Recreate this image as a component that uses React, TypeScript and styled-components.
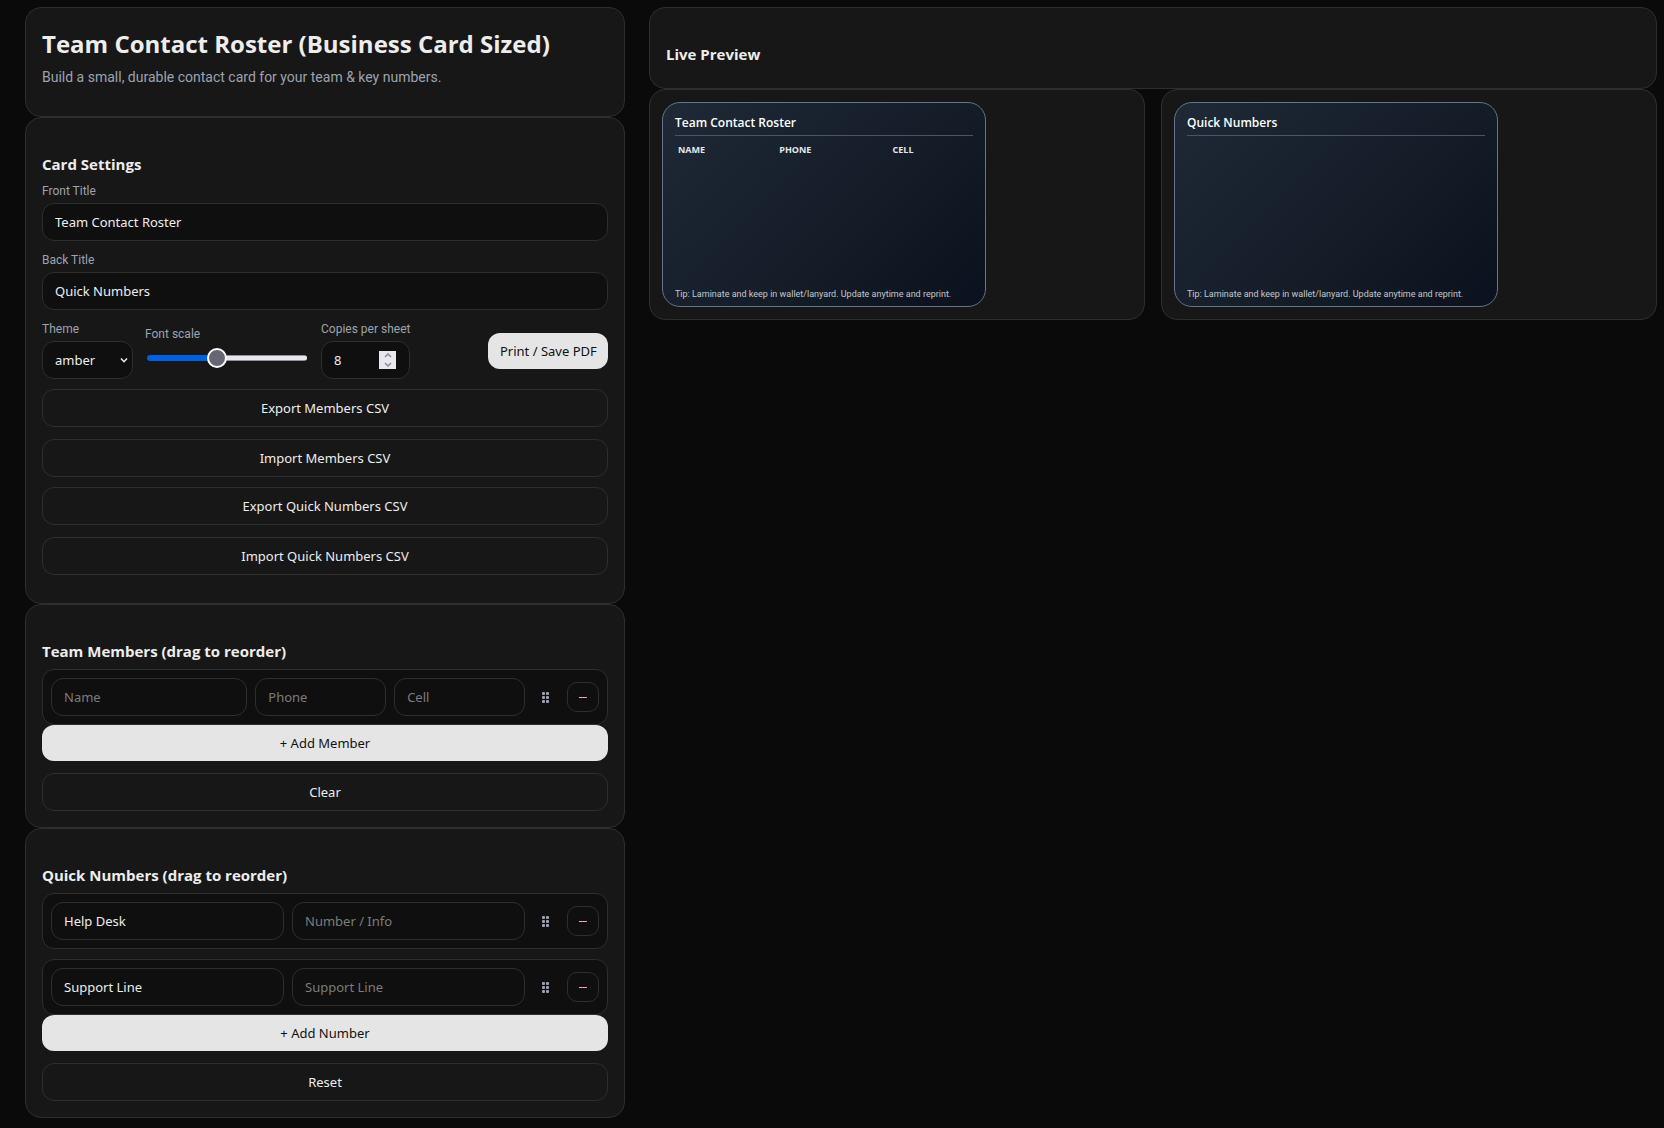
import React, { useState } from "react";
import styled, { createGlobalStyle, css } from "styled-components";

const GlobalStyle = createGlobalStyle`
  *, *::before, *::after { box-sizing: border-box; }
  body {
    margin: 0;
    background: #0a0a0a;
    color: #ededed;
    font-family: "Open Sans", "Noto Sans", sans-serif;
    font-size: 14px;
  }
  input, select, button { font-family: "Noto Sans", "Open Sans", sans-serif; }
`;

const noteFont = `Roboto, "Open Sans", sans-serif`;

const Page = styled.div`
  display: grid;
  grid-template-columns: minmax(0, 25fr) minmax(0, 42fr);
  gap: 24px;
  align-items: start;
  padding: 7px 7px 9px 25px;
`;

const Panel = styled.section`
  padding: 16px;
  border: 1px solid #2e2e2e;
  border-radius: 16px;
  background: #171717;
`;

const HeaderPanel = styled(Panel)`
  padding-bottom: 28px;
`;

const SettingsPanel = styled(Panel)`
  padding-bottom: 28px;
`;

const Title = styled.h1`
  margin: 0 0 2px;
  font-size: 24px;
  line-height: 40px;
  font-weight: 700;
`;

const Subtitle = styled.p`
  margin: 0;
  color: #9ca3af;
  font-family: ${noteFont};
  font-size: 14px;
  line-height: 22px;
`;

const Heading = styled.h3`
  margin: 18px 0 6px;
  font-size: 15px;
  line-height: 24px;
  font-weight: 700;
`;

const Stack = styled.div<{ $gap: number }>`
  display: flex;
  flex-direction: column;
  gap: ${(p) => p.$gap}px;
`;

const Field = styled.div`
  display: flex;
  flex-direction: column;
`;

const Label = styled.label`
  margin-bottom: 3px;
  color: #9ca3af;
  font-family: ${noteFont};
  font-size: 12px;
  line-height: 18px;
  white-space: nowrap;
`;

const box = css`
  height: 38px;
  border: 1px solid #2e2e2e;
  border-radius: 12px;
  background: #0f0f0f;
  color: #ededed;
  font-size: 13px;
`;

const TextInput = styled.input`
  ${box}
  width: 100%;
  min-width: 0;
  padding: 0 12px;
  outline: none;
  &::placeholder { color: #7c7c7c; opacity: 1; }
`;

const Controls = styled.div`
  display: flex;
  align-items: flex-end;
  gap: 12px;
`;

const SelectWrap = styled.div`
  position: relative;
  width: 91px;
`;

const Select = styled.select`
  ${box}
  width: 100%;
  padding: 0 12px;
  appearance: none;
  outline: none;
`;

const Chevron = styled.svg`
  position: absolute;
  right: 4px;
  top: 16px;
  pointer-events: none;
`;

const RangeField = styled(Field)`
  margin-bottom: 9px;
`;

const Range = styled.input<{ $fill: number }>`
  appearance: none;
  width: 160px;
  height: 24px;
  margin: 0 2px;
  background: transparent;
  &::-webkit-slider-runnable-track {
    height: 6px;
    border-radius: 3px;
    background:
      linear-gradient(to right, #0060df ${(p) => p.$fill}%, transparent ${(p) => p.$fill}%),
      linear-gradient(#8f8f9d 1px, #e9e9ed 1px, #e9e9ed 5px, #8f8f9d 5px);
  }
  &::-webkit-slider-thumb {
    appearance: none;
    width: 20px;
    height: 20px;
    margin-top: -7px;
    border: 2px solid #ffffff;
    border-radius: 50%;
    background: #676774;
  }
`;

const NumberWrap = styled.div`
  ${box}
  display: flex;
  align-items: center;
  width: 89px;
  padding: 0 13px 0 12px;
`;

const NumberInput = styled.input`
  flex: 1;
  min-width: 0;
  padding: 0;
  border: 0;
  outline: none;
  background: transparent;
  color: inherit;
  font-size: 13px;
  appearance: textfield;
  &::-webkit-inner-spin-button, &::-webkit-outer-spin-button { appearance: none; margin: 0; }
`;

const Spinner = styled.div`
  display: flex;
  flex-direction: column;
  width: 17px;
  background: #e9e9ed;
`;

const SpinButton = styled.button`
  display: grid;
  place-items: center;
  height: 9px;
  padding: 0;
  border: 0;
  background: transparent;
`;

const Button = styled.button`
  width: 100%;
  height: 38px;
  padding: 0 12px;
  border: 1px solid #2e2e2e;
  border-radius: 12px;
  background: #171717;
  color: #ededed;
  font-size: 13px;
  white-space: nowrap;
  cursor: pointer;
`;

const PrimaryButton = styled(Button)`
  height: 36px;
  border: 0;
  background: #e5e5e5;
  color: #111111;
`;

const PrintButton = styled(PrimaryButton)`
  width: 120px;
  margin: 0 0 10px auto;
`;

const Row = styled.div<{ $columns: string }>`
  display: grid;
  grid-template-columns: ${(p) => p.$columns} 26px 32px;
  gap: 8px;
  align-items: center;
  padding: 8px;
  border: 1px solid #2e2e2e;
  border-radius: 12px;
  background: #0f0f0f;
`;

const Handle = styled.span`
  display: grid;
  place-items: center;
  color: #9ca3af;
  cursor: grab;
`;

const RemoveButton = styled(Button)`
  display: grid;
  place-items: center;
  height: 30px;
  padding: 0;
  border-radius: 10px;
  background: transparent;
  color: #fca5a5;
`;

const Previews = styled.div`
  display: grid;
  grid-template-columns: repeat(2, minmax(0, 1fr));
  gap: 16px;
`;

const PreviewPanel = styled(Panel)`
  padding: 12px;
`;

const Card = styled.article`
  display: flex;
  flex-direction: column;
  width: 324px;
  max-width: 100%;
  height: 205px;
  padding: 10px 12px 5px;
  border: 1px solid #64748b;
  border-radius: 18px;
  background: linear-gradient(135deg, #1f2937 0%, #131c27 60%, #0b111e 100%);
`;

const CardTitle = styled.h4`
  margin: 0 0 5px;
  padding-bottom: 2px;
  border-bottom: 1px solid #4b5563;
  color: #ffffff;
  font-size: 12px;
  line-height: 20px;
  font-weight: 600;
`;

const CardTable = styled.table`
  width: 100%;
  border-collapse: collapse;
  table-layout: fixed;
  th {
    padding: 2px 3px;
    color: #e5e7eb;
    font-size: 9px;
    line-height: 14px;
    font-weight: 700;
    text-align: left;
    text-transform: uppercase;
  }
`;

const Tip = styled.p`
  margin: auto 0 0;
  color: #c4c8cf;
  font-family: ${noteFont};
  font-size: 9px;
  line-height: 14px;
`;

const TIP = "Tip: Laminate and keep in wallet/lanyard. Update anytime and reprint.";

const DragHandle = () => (
  <Handle title="Drag to reorder">
    <svg width="8" height="11" viewBox="0 0 8 11" fill="currentColor" aria-hidden="true">
      {[0, 4, 8].map((y) => (
        <React.Fragment key={y}>
          <rect x="0" y={y} width="3" height="3" rx="1" />
          <rect x="4" y={y} width="3" height="3" rx="1" />
        </React.Fragment>
      ))}
    </svg>
  </Handle>
);

const MinusIcon = () => (
  <svg width="8" height="2" viewBox="0 0 8 2" fill="currentColor" aria-hidden="true">
    <rect y="1" width="8" height="1" />
  </svg>
);

const Arrow = ({ up }: { up?: boolean }) => (
  <svg width="8" height="5" viewBox="0 0 8 5" fill="none" stroke="#8f8f9d" strokeWidth="1.6" aria-hidden="true">
    <path d={up ? "M1 4 4 1 7 4" : "M1 1 4 4 7 1"} />
  </svg>
);

export default function App() {
  const [front, setFront] = useState("Team Contact Roster");
  const [back, setBack] = useState("Quick Numbers");
  const [theme, setTheme] = useState("amber");
  const [scale, setScale] = useState(43);
  const [copies, setCopies] = useState(8);
  const [member, setMember] = useState({ Name: "", Phone: "", Cell: "" });
  const [numbers, setNumbers] = useState([
    { label: "Help Desk", value: "", hint: "Number / Info" },
    { label: "Support Line", value: "", hint: "Support Line" },
  ]);

  const editNumber = (index: number, key: "label" | "value", text: string) =>
    setNumbers(numbers.map((n, i) => (i === index ? { ...n, [key]: text } : n)));

  return (
    <>
      <GlobalStyle />
      <Page>
        <div>
          <HeaderPanel>
            <Title>Team Contact Roster (Business Card Sized)</Title>
            <Subtitle>Build a small, durable contact card for your team &amp; key numbers.</Subtitle>
          </HeaderPanel>

          <SettingsPanel>
            <Heading>Card Settings</Heading>
            <Stack $gap={10}>
              <Field>
                <Label htmlFor="front">Front Title</Label>
                <TextInput id="front" value={front} onChange={(e) => setFront(e.target.value)} />
              </Field>
              <Field>
                <Label htmlFor="back">Back Title</Label>
                <TextInput id="back" value={back} onChange={(e) => setBack(e.target.value)} />
              </Field>
              <Controls>
                <Field>
                  <Label htmlFor="theme">Theme</Label>
                  <SelectWrap>
                    <Select id="theme" value={theme} onChange={(e) => setTheme(e.target.value)}>
                      <option>amber</option>
                      <option>slate</option>
                    </Select>
                    <Chevron width="10" height="7" viewBox="0 0 10 7" fill="none" stroke="#ededed" strokeWidth="1.5">
                      <path d="M2 1.5 5 4.7 8 1.5" />
                    </Chevron>
                  </SelectWrap>
                </Field>
                <RangeField>
                  <Label htmlFor="scale">Font scale</Label>
                  <Range
                    id="scale"
                    type="range"
                    min={0}
                    max={100}
                    value={scale}
                    $fill={scale}
                    onChange={(e) => setScale(Number(e.target.value))}
                  />
                </RangeField>
                <Field>
                  <Label htmlFor="copies">Copies per sheet</Label>
                  <NumberWrap>
                    <NumberInput
                      id="copies"
                      type="number"
                      value={copies}
                      onChange={(e) => setCopies(Number(e.target.value))}
                    />
                    <Spinner>
                      <SpinButton aria-label="More copies" onClick={() => setCopies(copies + 1)}>
                        <Arrow up />
                      </SpinButton>
                      <SpinButton aria-label="Fewer copies" onClick={() => setCopies(copies - 1)}>
                        <Arrow />
                      </SpinButton>
                    </Spinner>
                  </NumberWrap>
                </Field>
                <PrintButton onClick={() => window.print()}>Print / Save PDF</PrintButton>
              </Controls>
              <Stack $gap={12}>
                <Button>Export Members CSV</Button>
                <Button>Import Members CSV</Button>
              </Stack>
              <Stack $gap={12}>
                <Button>Export Quick Numbers CSV</Button>
                <Button>Import Quick Numbers CSV</Button>
              </Stack>
            </Stack>
          </SettingsPanel>

          <Panel>
            <Heading>Team Members (drag to reorder)</Heading>
            <Row $columns="minmax(0, 3fr) minmax(0, 2fr) minmax(0, 2fr)">
              {(["Name", "Phone", "Cell"] as const).map((key) => (
                <TextInput
                  key={key}
                  aria-label={key}
                  placeholder={key}
                  value={member[key]}
                  onChange={(e) => setMember({ ...member, [key]: e.target.value })}
                />
              ))}
              <DragHandle />
              <RemoveButton aria-label="Remove member">
                <MinusIcon />
              </RemoveButton>
            </Row>
            <Stack $gap={12}>
              <PrimaryButton>+ Add Member</PrimaryButton>
              <Button onClick={() => setMember({ Name: "", Phone: "", Cell: "" })}>Clear</Button>
            </Stack>
          </Panel>

          <Panel>
            <Heading>Quick Numbers (drag to reorder)</Heading>
            <Stack $gap={10}>
              {numbers.map((n, i) => (
                <Row key={i} $columns="minmax(0, 1fr) minmax(0, 1fr)">
                  <TextInput
                    aria-label="Label"
                    value={n.label}
                    onChange={(e) => editNumber(i, "label", e.target.value)}
                  />
                  <TextInput
                    aria-label="Number"
                    placeholder={n.hint}
                    value={n.value}
                    onChange={(e) => editNumber(i, "value", e.target.value)}
                  />
                  <DragHandle />
                  <RemoveButton aria-label="Remove number">
                    <MinusIcon />
                  </RemoveButton>
                </Row>
              ))}
            </Stack>
            <Stack $gap={12}>
              <PrimaryButton>+ Add Number</PrimaryButton>
              <Button>Reset</Button>
            </Stack>
          </Panel>
        </div>

        <div>
          <Panel>
            <Heading>Live Preview</Heading>
          </Panel>
          <Previews>
            <PreviewPanel>
              <Card>
                <CardTitle>{front}</CardTitle>
                <CardTable>
                  <colgroup>
                    <col width="34%" />
                    <col width="38%" />
                    <col width="28%" />
                  </colgroup>
                  <thead>
                    <tr>
                      <th scope="col">Name</th>
                      <th scope="col">Phone</th>
                      <th scope="col">Cell</th>
                    </tr>
                  </thead>
                </CardTable>
                <Tip>{TIP}</Tip>
              </Card>
            </PreviewPanel>
            <PreviewPanel>
              <Card>
                <CardTitle>{back}</CardTitle>
                <Tip>{TIP}</Tip>
              </Card>
            </PreviewPanel>
          </Previews>
        </div>
      </Page>
    </>
  );
}
